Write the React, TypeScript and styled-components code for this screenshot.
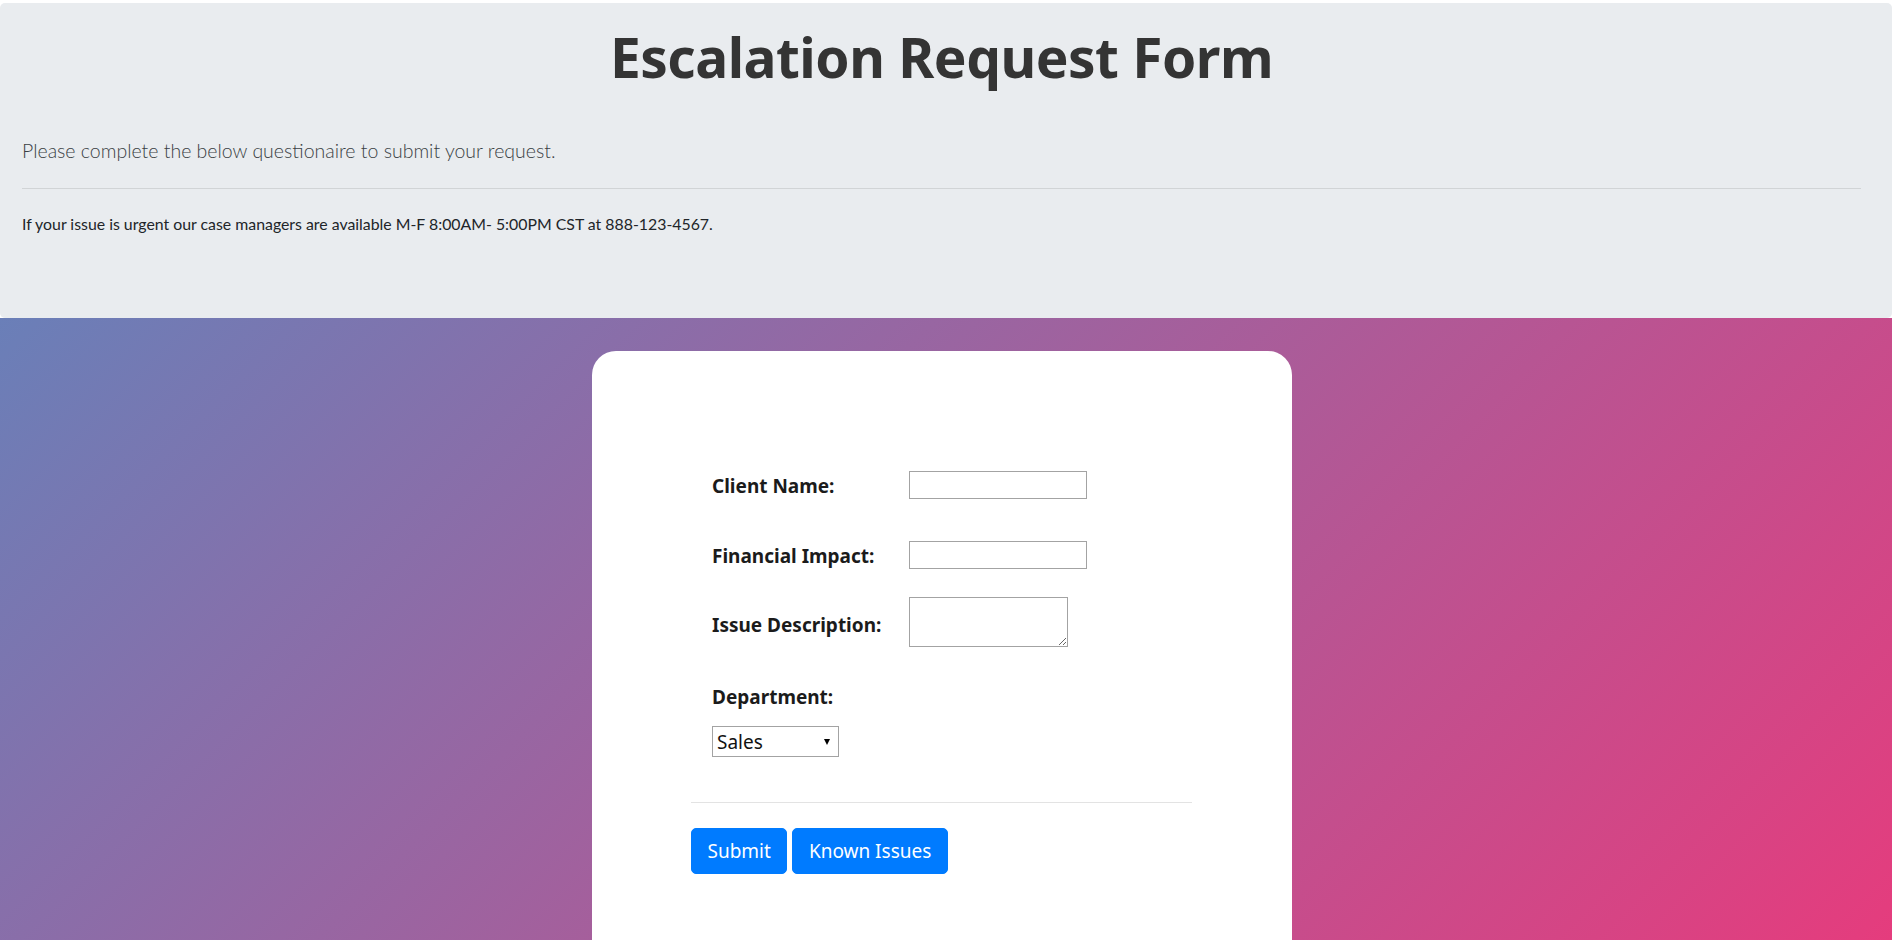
import React from "react";
import styled, { createGlobalStyle } from "styled-components";

const GlobalStyle = createGlobalStyle`
  html, body {
    margin: 0;
    padding: 0;
    background: #ffffff;
    overflow: hidden;
  }
  * { box-sizing: border-box; }
`;

const Page = styled.div`
  padding: 3px 3px 0 0;
  width: 1895px;
  font-family: "Noto Sans", "Liberation Sans", sans-serif;
  color: #212529;
`;

const Jumbotron = styled.header`
  height: 315px;
  background: #e9ecef;
  border-radius: 5px;
  padding: 21px 31px 0 22px;
`;

const Title = styled.h1`
  margin: 0;
  text-align: center;
  font-family: "Noto Sans", "DejaVu Sans", sans-serif;
  font-weight: 700;
  font-size: 55px;
  line-height: 66px;
  letter-spacing: -0.5px;
  color: #343434;
`;

const Lead = styled.p`
  margin: 47px 0 0;
  font-family: "Lato", "Open Sans", sans-serif;
  font-weight: 300;
  font-size: 19.5px;
  line-height: 27px;
  color: #3a3f44;
`;

const Rule = styled.hr`
  margin: 24px 0 0;
  border: 0;
  border-top: 1px solid rgba(0, 0, 0, 0.1);
`;

const Notice = styled.p`
  margin: 24px 0 0;
  font-family: "Lato", "Open Sans", sans-serif;
  font-size: 15.85px;
  line-height: 22px;
  color: #212529;
`;

const GradientSection = styled.main`
  height: 622px;
  background: linear-gradient(135deg, #6a7fb8 0%, #e53c7d 100%);
  padding: 33px 8px 0 0;
`;

const Card = styled.section`
  width: 700px;
  height: 700px;
  margin: 0 auto;
  background: #ffffff;
  border-radius: 24px;
  padding: 120px 0 0 99px;
`;

const FormBody = styled.div`
  padding-left: 21px;
  display: flex;
  flex-direction: column;
`;

const FieldRow = styled.div<{ $gap: number }>`
  display: grid;
  grid-template-columns: 197px auto;
  align-items: center;
  margin-top: ${(p) => p.$gap}px;
`;

const Label = styled.label<{ $drop?: number }>`
  display: block;
  padding-top: ${(p) => p.$drop ?? 2}px;
  font-family: "Noto Sans", "DejaVu Sans", sans-serif;
  font-weight: 700;
  font-size: 19px;
  line-height: 24px;
  color: #1b1b1b;
`;

const StackLabel = styled(Label)`
  padding-top: 0;
  margin-top: 38px;
`;

const TextInput = styled.input`
  width: 178px;
  height: 28px;
  border: 1px solid #a3a3a3;
  background: #fff;
  padding: 1px 3px;
  font-size: 15px;
  font-family: "Noto Sans", sans-serif;
`;

const TextArea = styled.textarea`
  width: 159px;
  height: 50px;
  border: 1px solid #a3a3a3;
  background: #fff;
  padding: 2px;
  font-size: 15px;
  font-family: "Noto Sans", sans-serif;
  display: block;
`;

const SelectWrap = styled.div`
  position: relative;
  width: 127px;
  height: 31px;
  margin-top: 17px;
`;

const Select = styled.select`
  appearance: none;
  -webkit-appearance: none;
  width: 127px;
  height: 31px;
  border: 1px solid #a3a3a3;
  border-radius: 0;
  background: #fff;
  padding: 0 0 0 4px;
  font-family: "Noto Sans", sans-serif;
  font-size: 19px;
  color: #111;
`;

const Caret = styled.svg`
  position: absolute;
  right: 9px;
  top: 13px;
  width: 6px;
  height: 6px;
  pointer-events: none;
`;

const CardRule = styled.hr`
  width: 501px;
  margin: 45px 0 0;
  border: 0;
  border-top: 1px solid #e3e3e3;
`;

const ButtonRow = styled.div`
  display: flex;
  gap: 5px;
  margin-top: 25px;
`;

const Button = styled.button`
  height: 46px;
  padding: 0 15.5px;
  border: 1px solid #007bff;
  border-radius: 5px;
  background: #007bff;
  color: #ffffff;
  font-family: "Noto Sans", "Open Sans", sans-serif;
  font-size: 19px;
  line-height: 1.5;
  cursor: pointer;
`;

export default function App() {
  return (
    <>
      <GlobalStyle />
      <Page>
        <Jumbotron>
          <Title>Escalation Request Form</Title>
          <Lead>Please complete the below questionaire to submit your request.</Lead>
          <Rule />
          <Notice>
            If your issue is urgent our case managers are available M-F 8:00AM- 5:00PM CST at 888-123-4567.
          </Notice>
        </Jumbotron>
        <GradientSection>
          <Card>
            <FormBody>
              <FieldRow $gap={0}>
                <Label htmlFor="client">Client Name:</Label>
                <TextInput id="client" type="text" />
              </FieldRow>
              <FieldRow $gap={42}>
                <Label htmlFor="impact">Financial Impact:</Label>
                <TextInput id="impact" type="text" />
              </FieldRow>
              <FieldRow $gap={28}>
                <Label htmlFor="issue" $drop={6}>Issue Description:</Label>
                <TextArea id="issue" />
              </FieldRow>
              <StackLabel htmlFor="dept">Department:</StackLabel>
              <SelectWrap>
                <Select id="dept" defaultValue="Sales">
                  <option>Sales</option>
                  <option>Support</option>
                  <option>Billing</option>
                </Select>
                <Caret viewBox="0 0 6 6">
                  <polygon points="0,0 6,0 3,6" fill="#000" />
                </Caret>
              </SelectWrap>
            </FormBody>
            <CardRule />
            <ButtonRow>
              <Button type="button">Submit</Button>
              <Button type="button">Known Issues</Button>
            </ButtonRow>
          </Card>
        </GradientSection>
      </Page>
    </>
  );
}
